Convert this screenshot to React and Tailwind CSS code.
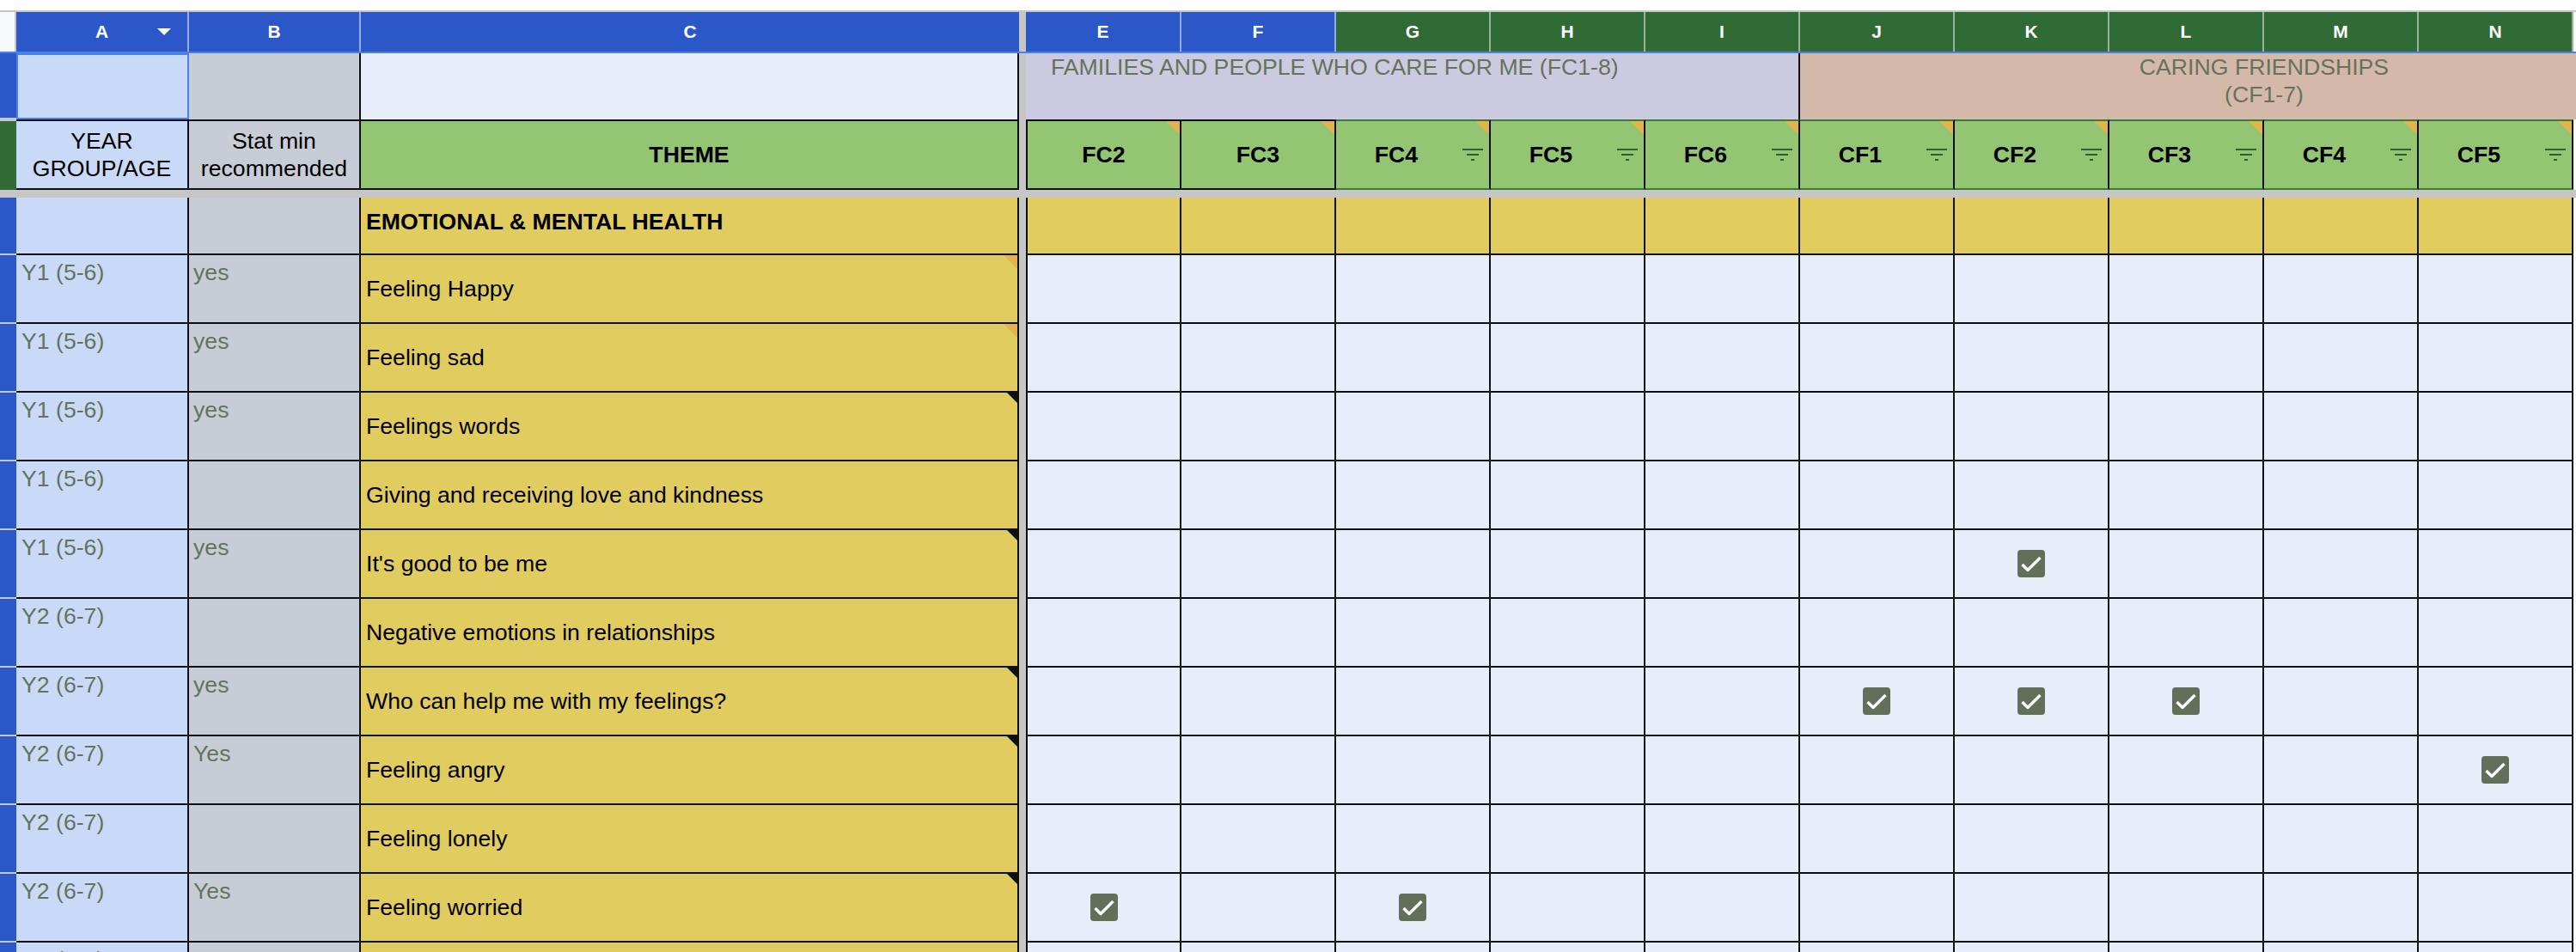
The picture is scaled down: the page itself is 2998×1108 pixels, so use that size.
import React from 'react';

// Sheet palette
const LINE = 'border-[#0c0f14]';
const YEAR_BG = 'bg-[#c9daf8]';
const STAT_BG = 'bg-[#c7ccd6]';
const PALE_BG = 'bg-[#e8eef9]';
const THEME_BG = 'bg-[#e1cc5f]';
const HEAD_BG = 'bg-[#93c573]';
const MUTED = 'text-[#66735b]';

const COLS = [
  { letter: 'E', code: 'FC2', blue: true, filter: false },
  { letter: 'F', code: 'FC3', blue: true, filter: false },
  { letter: 'G', code: 'FC4', blue: false, filter: true },
  { letter: 'H', code: 'FC5', blue: false, filter: true },
  { letter: 'I', code: 'FC6', blue: false, filter: true },
  { letter: 'J', code: 'CF1', blue: false, filter: true },
  { letter: 'K', code: 'CF2', blue: false, filter: true },
  { letter: 'L', code: 'CF3', blue: false, filter: true },
  { letter: 'M', code: 'CF4', blue: false, filter: true },
  { letter: 'N', code: 'CF5', blue: false, filter: true },
];

const ROWS = [
  { year: 'Y1 (5-6)', stat: 'yes', theme: 'Feeling Happy', note: 'orange', checks: [] },
  { year: 'Y1 (5-6)', stat: 'yes', theme: 'Feeling sad', note: 'orange', checks: [] },
  { year: 'Y1 (5-6)', stat: 'yes', theme: 'Feelings words', note: 'black', checks: [] },
  { year: 'Y1 (5-6)', stat: '', theme: 'Giving and receiving love and kindness', note: null, checks: [] },
  { year: 'Y1 (5-6)', stat: 'yes', theme: "It's good to be me", note: 'black', checks: ['K'] },
  { year: 'Y2 (6-7)', stat: '', theme: 'Negative emotions in relationships', note: null, checks: [] },
  { year: 'Y2 (6-7)', stat: 'yes', theme: 'Who can help me with my feelings?', note: 'black', checks: ['J', 'K', 'L'] },
  { year: 'Y2 (6-7)', stat: 'Yes', theme: 'Feeling angry', note: 'black', checks: ['N'] },
  { year: 'Y2 (6-7)', stat: '', theme: 'Feeling lonely', note: null, checks: [] },
  { year: 'Y2 (6-7)', stat: 'Yes', theme: 'Feeling worried', note: 'black', checks: ['E', 'G'] },
  { year: 'Y2 (6-7)', stat: '', theme: '', note: null, checks: [] },
];

function colWidth(i) {
  return i === 0 ? 'w-[181px] border-l-2' : 'w-[180px]';
}

function NoteMark({ color }) {
  if (color === 'orange') {
    return (
      <div className="absolute top-0 right-0 w-0 h-0 border-t-[16px] border-l-[16px] border-t-[#e4b44c] border-l-transparent" />
    );
  }
  return (
    <div className="absolute top-0 right-0 w-0 h-0 border-t-[12px] border-l-[12px] border-t-[#0c0f14] border-l-transparent" />
  );
}

function FilterIcon() {
  return (
    <div className="absolute right-[7px] top-1/2 -translate-y-1/2 flex flex-col items-center gap-[4px]">
      <div className="w-[24px] h-[2px] bg-[#2e5e34]" />
      <div className="w-[14px] h-[2px] bg-[#2e5e34]" />
      <div className="w-[4px] h-[2px] bg-[#2e5e34]" />
    </div>
  );
}

function Checkbox() {
  return (
    <div className="w-[32px] h-[32px] rounded-[4px] bg-[#636f5a] flex items-center justify-center">
      <svg viewBox="0 0 32 32" className="w-[32px] h-[32px]">
        <path d="M5.5 17 L12 23.5 L26.5 9" stroke="#ffffff" strokeWidth="3.4" fill="none" strokeLinejoin="round" />
      </svg>
    </div>
  );
}

function Strip({ className = 'bg-[#2b57c9]' }) {
  return <div className={`w-[19px] shrink-0 border-b-2 border-[#c3c8d2] ${className}`} />;
}

function Freeze() {
  return <div className="w-[8px] shrink-0 bg-[#c6c6c6]" />;
}

function LetterRow() {
  return (
    <div className="flex h-[48px] border-b-2 border-[#4a80e8]">
      <div className="w-[19px] shrink-0 bg-[#f8f9fa] border-r-2 border-[#c6c6c6]" />
      <div className="relative w-[201px] shrink-0 bg-[#2b57c9] border-r-2 border-white/50 flex items-center justify-center text-white font-bold text-[21px]">
        A
        <div className="absolute left-[164px] top-[19px] w-0 h-0 border-t-[8px] border-t-white border-x-[8px] border-x-transparent" />
      </div>
      <div className="w-[200px] shrink-0 bg-[#2b57c9] border-r-2 border-white/50 flex items-center justify-center text-white font-bold text-[21px]">B</div>
      <div className="w-[766px] shrink-0 bg-[#2b57c9] flex items-center justify-center text-white font-bold text-[21px]">C</div>
      <Freeze />
      {COLS.map((c, i) => (
        <div
          key={c.letter}
          className={`${i === 0 ? 'w-[181px]' : 'w-[180px]'} shrink-0 border-r-2 border-white/50 flex items-center justify-center text-white font-bold text-[21px] ${c.blue ? 'bg-[#2b57c9]' : 'bg-[#306a35]'}`}
        >
          {c.letter}
        </div>
      ))}
      <div className="flex-1 bg-white" />
    </div>
  );
}

function GroupRow() {
  return (
    <div className="flex h-[77px]">
      <Strip />
      <div className={`w-[201px] shrink-0 ${YEAR_BG} border-2 border-[#4a80e8]`} />
      <div className={`w-[200px] shrink-0 ${STAT_BG} border-r-2 ${LINE}`} />
      <div className={`w-[766px] shrink-0 ${PALE_BG} border-r-2 ${LINE}`} />
      <Freeze />
      <div className={`w-[901px] shrink-0 bg-[#cccae0] border-r-2 ${LINE} pl-[29px] ${MUTED}`}>
        FAMILIES AND PEOPLE WHO CARE FOR ME (FC1-8)
      </div>
      <div className={`flex-1 bg-[#d4b9aa] pl-[180px] pr-[3px] text-center ${MUTED}`}>
        CARING FRIENDSHIPS
        <br />
        (CF1-7)
      </div>
    </div>
  );
}

function HeadingRow() {
  const cell = `border-t-2 border-b-2 border-r-2 ${LINE}`;
  return (
    <div className="flex h-[82px]">
      <div className="w-[19px] shrink-0 bg-[#306a35] border-t-2 border-[#c3c8d2]" />
      <div className={`w-[201px] shrink-0 ${YEAR_BG} ${cell} flex items-center justify-center text-center`}>
        YEAR
        <br />
        GROUP/AGE
      </div>
      <div className={`w-[200px] shrink-0 ${STAT_BG} ${cell} flex items-center justify-center text-center`}>
        Stat min
        <br />
        recommended
      </div>
      <div className={`w-[766px] shrink-0 ${HEAD_BG} ${cell} flex items-center justify-center font-bold`}>THEME</div>
      <Freeze />
      {COLS.map((c, i) => (
        <div
          key={c.code}
          className={`relative ${colWidth(i)} shrink-0 ${HEAD_BG} border-r-2 ${LINE} border-t-2 border-b-2 ${c.blue ? 'border-t-[#0c0f14] border-b-[#0c0f14]' : 'border-t-[#3c7a3a] border-b-[#3c7a3a]'} flex items-center font-bold`}
        >
          <div className={c.filter ? 'w-[140px] text-center' : 'w-full text-center'}>{c.code}</div>
          {c.filter && <FilterIcon />}
          <NoteMark color="orange" />
        </div>
      ))}
      <div className="flex-1 bg-white" />
    </div>
  );
}

function SectionRow() {
  const cell = `border-b-2 border-r-2 ${LINE}`;
  return (
    <div className="flex h-[67px]">
      <Strip />
      <div className={`w-[201px] shrink-0 ${YEAR_BG} ${cell}`} />
      <div className={`w-[200px] shrink-0 ${STAT_BG} ${cell}`} />
      <div className={`w-[766px] shrink-0 ${THEME_BG} ${cell} pl-[6px] pt-[12px] font-bold`}>
        EMOTIONAL &amp; MENTAL HEALTH
      </div>
      <Freeze />
      {COLS.map((c, i) => (
        <div key={c.code} className={`${colWidth(i)} shrink-0 ${THEME_BG} ${cell}`} />
      ))}
      <div className="flex-1 bg-white" />
    </div>
  );
}

function TopicRow({ row }) {
  const cell = `border-b-2 border-r-2 ${LINE}`;
  return (
    <div className="flex h-[80px] shrink-0">
      <Strip />
      <div className={`w-[201px] shrink-0 ${YEAR_BG} ${cell} pl-[6px] pt-[4px] ${MUTED}`}>{row.year}</div>
      <div className={`w-[200px] shrink-0 ${STAT_BG} ${cell} pl-[5px] pt-[4px] ${MUTED}`}>{row.stat}</div>
      <div className={`relative w-[766px] shrink-0 ${THEME_BG} ${cell} pl-[6px] flex items-center`}>
        {row.theme}
        {row.note && <NoteMark color={row.note} />}
      </div>
      <Freeze />
      {COLS.map((c, i) => (
        <div key={c.code} className={`${colWidth(i)} shrink-0 ${PALE_BG} ${cell} flex items-center justify-center`}>
          {row.checks.includes(c.letter) && <Checkbox />}
        </div>
      ))}
      <div className="flex-1 bg-white" />
    </div>
  );
}

export default function App() {
  return (
    <div className="w-[2998px] h-[1108px] overflow-hidden bg-white text-[26.67px] leading-[32px] text-black font-['Liberation_Sans',Arial,sans-serif]">
      <div className="h-[12px] bg-white" />
      <div className="h-[2px] bg-[#c6c6c6]" />
      <LetterRow />
      <GroupRow />
      <HeadingRow />
      <div className="h-[9px] bg-[#c6c6c6]" />
      <SectionRow />
      {ROWS.map((row, i) => (
        <TopicRow key={i} row={row} />
      ))}
    </div>
  );
}
